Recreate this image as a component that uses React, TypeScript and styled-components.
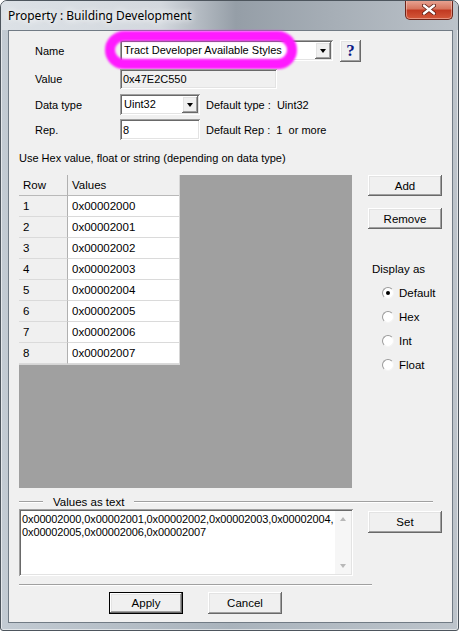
import styled, { createGlobalStyle } from "styled-components";

const GlobalStyle = createGlobalStyle`
  html, body { margin: 0; padding: 0; background: #ffffff; }
  body {
    font-family: "Liberation Sans", Arial, sans-serif;
    font-size: 11px;
    color: #000;
  }
  * { box-sizing: border-box; }
`;

const Window = styled.div`
  width: 459px;
  height: 631px;
  display: flex;
  flex-direction: column;
  border: 1px solid #4d555d;
  border-radius: 7px 7px 3px 3px;
  background: linear-gradient(90deg, #c3cbd3, #a9b3bc 50%, #bdc4cb);
  box-shadow: inset 0 0 0 1px rgba(255, 255, 255, 0.55);
  overflow: hidden;
`;

const TitleBar = styled.div`
  height: 29px;
  flex: none;
  display: flex;
  align-items: flex-start;
  padding-left: 7px;
  background: linear-gradient(
    90deg,
    #dce1e6 0px,
    #d3d8de 160px,
    #959ea7 235px,
    #a6aeb6 330px,
    #bcc3ca 459px
  );
`;

const Title = styled.div`
  font-family: "Noto Sans", "Open Sans", sans-serif;
  font-size: 12px;
  line-height: 16px;
  margin-top: 7px;
  color: #000;
  text-shadow: 0 0 6px #fff, 0 0 10px #fff;
`;

const CloseButton = styled.div`
  margin-left: auto;
  margin-right: 5px;
  margin-top: -1px;
  width: 48px;
  height: 20px;
  display: flex;
  align-items: center;
  justify-content: center;
  border: 1px solid #6e2418;
  border-top: none;
  border-radius: 0 0 5px 5px;
  background: linear-gradient(180deg, #e9a797 0%, #d7765f 45%, #c23a22 55%, #d4583a 100%);
  box-shadow: inset 0 0 0 1px rgba(255, 220, 210, 0.45);
`;

const Client = styled.div`
  flex: 1;
  margin: 0 5px 7px 7px;
  border: 1px solid #717b85;
  background: #f0f0f0;
  padding: 9px 9px 0 10px;
  display: flex;
  flex-direction: column;
`;

const Form = styled.div`
  margin-left: 16px;
  display: flex;
  flex-direction: column;
`;

const FieldRow = styled.div<{ $mt: number }>`
  position: relative;
  display: flex;
  align-items: center;
  height: 21px;
  margin-top: ${({ $mt }) => $mt}px;
`;

const Label = styled.div`
  width: 85px;
  flex: none;
`;

const sunken = `
  box-shadow: inset 1px 1px #a0a0a0, inset -1px -1px #ffffff,
    inset 2px 2px #696969, inset -2px -2px #e3e3e3;
`;

const raised = `
  background: #f0f0f0;
  box-shadow: inset -1px -1px #696969, inset 1px 1px #ffffff,
    inset -2px -2px #a0a0a0, inset 2px 2px #e3e3e3;
`;

const Field = styled.div<{ $w: number; $h?: number; $readOnly?: boolean }>`
  width: ${({ $w }) => $w}px;
  height: ${({ $h = 21 }) => $h}px;
  display: flex;
  align-items: center;
  padding: 0 3px;
  background: ${({ $readOnly }) => ($readOnly ? "#f0f0f0" : "#ffffff")};
  ${sunken}
`;

const Combo = styled.div<{ $w: number }>`
  width: ${({ $w }) => $w}px;
  height: 21px;
  display: flex;
  padding: 2px;
  background: #ffffff;
  ${sunken}
`;

const ComboText = styled.div`
  flex: 1;
  padding-left: 2px;
  line-height: 17px;
  white-space: nowrap;
  overflow: hidden;
`;

const ArrowButton = styled.div`
  width: 16px;
  height: 17px;
  display: flex;
  align-items: center;
  justify-content: center;
  ${raised}
  &::after {
    content: "";
    border-left: 3.5px solid transparent;
    border-right: 3.5px solid transparent;
    border-top: 4px solid #000;
  }
`;

const HelpButton = styled.div`
  margin-left: 7px;
  width: 21px;
  height: 22px;
  display: flex;
  align-items: center;
  justify-content: center;
  font-family: "Liberation Serif", "Times New Roman", serif;
  font-weight: bold;
  font-size: 17px;
  color: #0b1a86;
  ${raised}
`;

const Note = styled.div`
  margin-left: 6px;
  white-space: pre;
`;

const Highlight = styled.div`
  position: absolute;
  left: 70px;
  top: -9px;
  width: 192px;
  height: 38px;
  border: 10px solid #ff1aff;
  border-radius: 19px;
  filter: blur(0.8px);
  pointer-events: none;
`;

const Hint = styled.div`
  margin-top: 11px;
  line-height: 14px;
`;

const Middle = styled.div`
  margin-top: 10px;
  display: flex;
`;

const GridView = styled.div`
  width: 333px;
  height: 313px;
  background: #a0a0a0;
  flex: none;
`;

const Table = styled.div`
  display: grid;
  grid-template-columns: 49px 111px;
  width: 161px;
  border-right: 1px solid #d6d6d6;
  border-bottom: 1px solid #d6d6d6;
`;

const Cell = styled.div<{ $head?: boolean; $white?: boolean }>`
  height: 21px;
  display: flex;
  align-items: center;
  padding-left: 4px;
  font-size: 11.5px;
  background: ${({ $white }) => ($white ? "#ffffff" : "#f0f0f0")};
  border-bottom: 1px solid ${({ $head }) => ($head ? "#b9b9b9" : "#dadada")};
  border-right: 1px solid #b0b0b0;
  &:nth-child(2n) {
    border-right: none;
  }
`;

const RightCol = styled.div`
  margin-left: 16px;
  width: 74px;
  display: flex;
  flex-direction: column;
`;

const Button = styled.div<{ $w?: number; $h?: number; $default?: boolean; $mt?: number }>`
  width: ${({ $w = 74 }) => $w}px;
  height: ${({ $h = 22 }) => $h}px;
  margin-top: ${({ $mt = 0 }) => $mt}px;
  flex: none;
  display: flex;
  align-items: center;
  justify-content: center;
  font-size: 11.5px;
  ${raised}
  ${({ $default }) =>
    $default &&
    `box-shadow: inset 0 0 0 1px #000000, inset -2px -2px #696969, inset 2px 2px #ffffff,
      inset -3px -3px #a0a0a0, inset 3px 3px #e3e3e3;`}
`;

const DisplayAs = styled.div`
  margin-top: 33px;
  margin-left: 4px;
  line-height: 14px;
  font-size: 11.5px;
`;

const RadioList = styled.div`
  margin-top: 9px;
  display: flex;
  flex-direction: column;
  gap: 8px;
`;

const RadioRow = styled.div`
  height: 16px;
  display: flex;
  align-items: center;
  padding-left: 14px;
  gap: 5px;
  font-size: 11.5px;
`;

const RadioDot = styled.div<{ $checked?: boolean }>`
  width: 12px;
  height: 12px;
  border-radius: 50%;
  background: #ffffff;
  border: 1px solid;
  border-color: #9a9a9a #f4f4f4 #f4f4f4 #9a9a9a;
  display: flex;
  align-items: center;
  justify-content: center;
  &::after {
    content: "";
    width: 4px;
    height: 4px;
    border-radius: 50%;
    background: ${({ $checked }) => ($checked ? "#000" : "transparent")};
  }
`;

const GroupHeader = styled.div`
  margin-top: 7px;
  height: 14px;
  display: flex;
  align-items: center;
  margin-right: 10px;
`;

const Etched = styled.div<{ $w?: number }>`
  height: 2px;
  border-top: 1px solid #a0a0a0;
  border-bottom: 1px solid #ffffff;
  ${({ $w }) => ($w ? `width: ${$w}px; flex: none;` : "flex: 1;")}
`;

const GroupLabel = styled.div`
  padding: 0 10px;
  font-size: 11.5px;
`;

const BottomRow = styled.div`
  display: flex;
  align-items: flex-start;
`;

const TextBox = styled.div`
  width: 334px;
  height: 67px;
  display: flex;
  padding: 2px;
  background: #ffffff;
  ${sunken}
`;

const TextContent = styled.div`
  flex: 1;
  padding: 2px 0 0 1px;
  line-height: 13px;
  font-size: 11px;
  letter-spacing: -0.12px;
  white-space: pre;
`;

const ScrollBar = styled.div`
  width: 16px;
  display: flex;
  flex-direction: column;
  justify-content: space-between;
  align-items: center;
  padding: 6px 0;
  background: #f6f6f6;
`;

const ScrollArrow = styled.div<{ $up?: boolean }>`
  width: 0;
  height: 0;
  border-left: 3.5px solid transparent;
  border-right: 3.5px solid transparent;
  ${({ $up }) =>
    $up ? "border-bottom: 4px solid #b8b8b8;" : "border-top: 4px solid #b8b8b8;"}
`;

const Separator = styled.div`
  margin-top: 8px;
  width: 353px;
  height: 2px;
  border-top: 1px solid #a0a0a0;
  border-bottom: 1px solid #ffffff;
`;

const ActionRow = styled.div`
  margin-top: 6px;
  padding-left: 90px;
  display: flex;
  gap: 25px;
`;

const rows = Array.from({ length: 8 }, (_, i) => ({
  n: i + 1,
  v: "0x0000200" + i,
}));

const modes = ["Default", "Hex", "Int", "Float"];

export default function App() {
  return (
    <>
      <GlobalStyle />
      <Window>
        <TitleBar>
          <Title>Property : Building Development</Title>
          <CloseButton>
            <svg width="14" height="11" viewBox="0 0 14 11">
              <path d="M2 1.5 L12 9.5 M12 1.5 L2 9.5" stroke="#5c1a10" strokeWidth="4" strokeLinecap="round" />
              <path d="M2 1.5 L12 9.5 M12 1.5 L2 9.5" stroke="#ffffff" strokeWidth="2.4" strokeLinecap="round" />
            </svg>
          </CloseButton>
        </TitleBar>
        <Client>
          <Form>
            <FieldRow $mt={0}>
              <Label>Name</Label>
              <Combo $w={213}>
                <ComboText>Tract Developer Available Styles</ComboText>
                <ArrowButton />
              </Combo>
              <HelpButton>?</HelpButton>
              <Highlight />
            </FieldRow>
            <FieldRow $mt={7}>
              <Label>Value</Label>
              <Field $w={157} $h={20} $readOnly>0x47E2C550</Field>
            </FieldRow>
            <FieldRow $mt={5}>
              <Label>Data type</Label>
              <Combo $w={80}>
                <ComboText>Uint32</ComboText>
                <ArrowButton />
              </Combo>
              <Note>Default type :  Uint32</Note>
            </FieldRow>
            <FieldRow $mt={4}>
              <Label>Rep.</Label>
              <Field $w={80}>8</Field>
              <Note>Default Rep :  1  or more</Note>
            </FieldRow>
          </Form>
          <Hint>Use Hex value, float or string (depending on data type)</Hint>
          <Middle>
            <GridView>
              <Table>
                <Cell $head>Row</Cell>
                <Cell $head>Values</Cell>
                {rows.map((r) => [
                  <Cell key={"n" + r.n}>{r.n}</Cell>,
                  <Cell key={"v" + r.n} $white>
                    {r.v}
                  </Cell>,
                ])}
              </Table>
            </GridView>
            <RightCol>
              <Button $h={21}>Add</Button>
              <Button $h={21} $mt={12}>
                Remove
              </Button>
              <DisplayAs>Display as</DisplayAs>
              <RadioList>
                {modes.map((m, i) => (
                  <RadioRow key={m}>
                    <RadioDot $checked={i === 0} />
                    {m}
                  </RadioRow>
                ))}
              </RadioList>
            </RightCol>
          </Middle>
          <GroupHeader>
            <Etched $w={24} />
            <GroupLabel>Values as text</GroupLabel>
            <Etched />
          </GroupHeader>
          <BottomRow>
            <TextBox>
              <TextContent>
                {"0x00002000,0x00002001,0x00002002,0x00002003,0x00002004,\n0x00002005,0x00002006,0x00002007"}
              </TextContent>
              <ScrollBar>
                <ScrollArrow $up />
                <ScrollArrow />
              </ScrollBar>
            </TextBox>
            <Button $mt={2} style={{ marginLeft: 15 }}>
              Set
            </Button>
          </BottomRow>
          <Separator />
          <ActionRow>
            <Button $default>Apply</Button>
            <Button>Cancel</Button>
          </ActionRow>
        </Client>
      </Window>
    </>
  );
}
